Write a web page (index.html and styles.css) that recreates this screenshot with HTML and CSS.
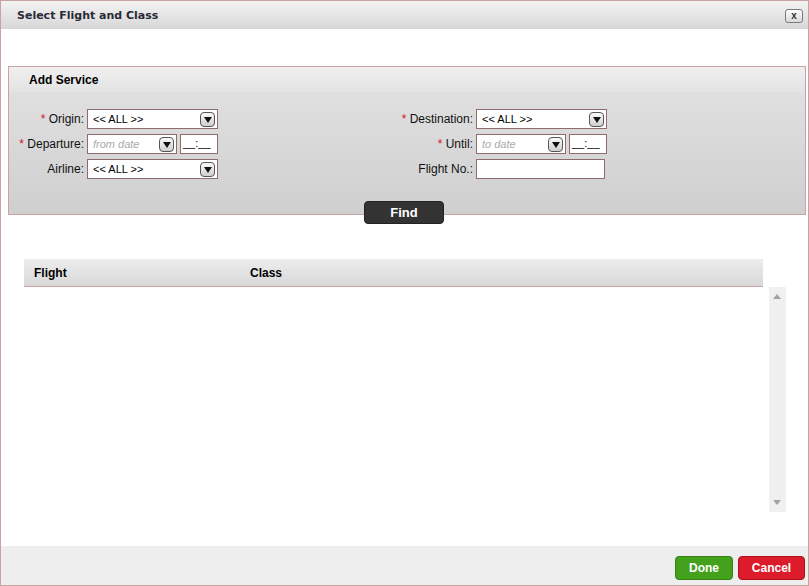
FILE: index.html
```html
<!DOCTYPE html>
<html lang="en">
<head>
  <meta charset="UTF-8" />
  <meta name="viewport" content="width=device-width, initial-scale=1.0" />
  <title>Select Flight and Class</title>
  <link rel="stylesheet" href="styles.css">
</head>
<body>
  <div class="dialog">
    <div class="titlebar">
      <span class="title">Select Flight and Class</span>
      <span class="close">x</span>
    </div>

    <div class="content">
      <div class="panel">
        <div class="panel-head">Add Service</div>
        <div class="panel-body">
          <div class="cols">
            <div class="col">
              <div class="row">
                <label><span class="req">*</span> Origin:</label>
                <div class="select"><span>&lt;&lt; ALL &gt;&gt;</span><i class="arrow"></i></div>
              </div>
              <div class="row">
                <label><span class="req">*</span> Departure:</label>
                <div class="select date"><span class="ph">from date</span><i class="arrow"></i></div>
                <div class="time">__:__</div>
              </div>
              <div class="row">
                <label>Airline:</label>
                <div class="select"><span>&lt;&lt; ALL &gt;&gt;</span><i class="arrow"></i></div>
              </div>
            </div>
            <div class="col right">
              <div class="row">
                <label><span class="req">*</span> Destination:</label>
                <div class="select"><span>&lt;&lt; ALL &gt;&gt;</span><i class="arrow"></i></div>
              </div>
              <div class="row">
                <label><span class="req">*</span> Until:</label>
                <div class="select date"><span class="ph">to date</span><i class="arrow"></i></div>
                <div class="time">__:__</div>
              </div>
              <div class="row">
                <label>Flight No.:</label>
                <div class="text"></div>
              </div>
            </div>
          </div>
          <div class="find-wrap"><button class="find">Find</button></div>
        </div>
      </div>

      <div class="grid">
        <div class="grid-head">
          <span class="c-flight">Flight</span>
          <span class="c-class">Class</span>
        </div>
        <div class="grid-body">
          <div class="list"></div>
          <div class="scroll"><i class="up"></i><i class="down"></i></div>
        </div>
      </div>
    </div>

    <div class="footer">
      <button class="btn done">Done</button>
      <button class="btn cancel">Cancel</button>
    </div>
  </div>
</body>
</html>
```

FILE: styles.css
```css
:root{--line:#c9a3a3;--field:#8d6d6d}
*{box-sizing:border-box}
body{margin:0;font-family:"Liberation Sans",Arial,sans-serif;font-size:12px;color:#000;background:#fff}
.dialog{width:809px;height:586px;border:1px solid var(--line);display:flex;flex-direction:column;background:#fff}

.titlebar{height:28px;display:flex;align-items:center;justify-content:space-between;padding:0 5px 0 16px;background:linear-gradient(#f3f3f3,#d7d7d7)}
.title{font-family:"DejaVu Sans",Verdana,sans-serif;font-weight:700;font-size:11px;color:#2a2a36}
.close{width:18px;height:14px;margin-top:2px;border:1px solid #7a7a7a;border-radius:3px;background:linear-gradient(#fdfdfd,#d9d9d9);font-size:10px;font-weight:700;line-height:11px;text-align:center;color:#333}

.content{flex:1;padding:37px 2px 0 7px}
.panel{border:1px solid var(--line);background:linear-gradient(#e3e3e3,#cfcfcf)}
.panel-head{height:27px;padding:6px 0 0 20px;font-weight:700;background:linear-gradient(#efefef,#e2e2e2);border-bottom:1px solid #dcdcdc}
.panel-body{padding:15px 0 0;margin-bottom:-10px}
.cols{display:flex;gap:180px}
.col{display:flex;flex-direction:column;gap:5px}
.row{display:flex;align-items:center;height:20px}
.row label{width:75px;text-align:right;margin-right:3px;white-space:nowrap;font-size:12px;color:#111}
.req{color:#d0141e}
.select{width:131px;height:20px;border:1px solid var(--field);background:#fff;display:flex;align-items:center;justify-content:space-between;padding:0 2px 0 5px;font-size:11px}
.select.date{width:90px}
.ph{color:#aaa;font-style:italic}
.arrow{width:15px;height:15px;border:1px solid #555;border-radius:4px;background:linear-gradient(#fafafa,#cfcfcf);position:relative}
.arrow::after{content:"";position:absolute;left:3px;top:4px;border-left:4px solid transparent;border-right:4px solid transparent;border-top:6px solid #111}
.time{width:38px;height:20px;margin-left:3px;border:1px solid var(--field);background:#fff;font-size:11px;padding:2px 0 0 2px}
.text{width:129px;height:20px;border:1px solid var(--field);background:#fff}

.find-wrap{text-align:center;padding-right:6px;margin-top:22px}
.find{width:80px;height:23px;border:1px solid #222;border-radius:4px;background:#333;color:#fff;font-family:"Liberation Sans",Arial,sans-serif;font-size:13px;font-weight:700;cursor:pointer}

.grid{margin:44px 0 0 16px;width:762px}
.grid-head{width:739px;height:28px;display:flex;align-items:center;padding-left:10px;font-weight:700;background:linear-gradient(#ededed,#d8d8d8);border-bottom:1px solid var(--line)}
.c-flight{width:216px}
.grid-body{display:flex;gap:6px;height:225px}
.list{width:739px}
.scroll{width:17px;background:#f0f0f0;position:relative}
.up,.down{position:absolute;left:4px;border-left:4px solid transparent;border-right:4px solid transparent}
.up{top:7px;border-bottom:5px solid #a3a3a3}
.down{bottom:7px;border-top:5px solid #a3a3a3}

.footer{height:39px;background:#eee;display:flex;justify-content:flex-end;align-items:flex-start;gap:5px;padding:10px 3px 0 0}
.btn{height:24px;border-radius:4px;color:#fff;font-family:"Liberation Sans",Arial,sans-serif;font-size:12px;font-weight:700;cursor:pointer}
.done{width:58px;background:#44a11c;border:1px solid #35801a}
.cancel{width:67px;background:#dc1c2b;border:1px solid #b0101c}
```
